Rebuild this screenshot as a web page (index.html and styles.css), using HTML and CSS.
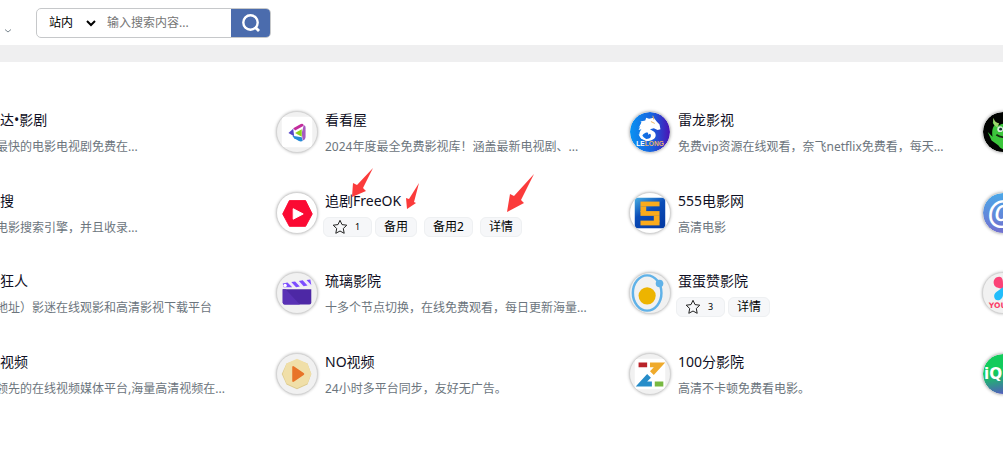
FILE: index.html
```
<!DOCTYPE html>
<html lang="zh-CN">
<head>
<meta charset="utf-8">
<meta name="viewport" content="width=device-width, initial-scale=1.0">
<title>影视导航</title>
<link rel="stylesheet" href="styles.css">
</head>
<body>
	<header>
		<svg class="caret" viewBox="0 0 8 6"><path d="M1 1.500l3 2.500 3-2.500" fill="none" stroke="#7c8890" stroke-width="1"/></svg>
		<form class="search">
			<select aria-label="搜索范围"><option>站内</option></select>
			<input type="text" placeholder="输入搜索内容..." aria-label="搜索">
			<button type="button" aria-label="搜索">
				<svg viewBox="0 0 20 20"><circle cx="9.500" cy="9.500" r="7.200" fill="none" stroke="#fff" stroke-width="2.400"/><path d="M14 14l4 4" stroke="#fff" stroke-width="2.800"/></svg>
			</button>
		</form>
	</header>
	<main>
		<div class="list">
			<!-- 第一行 -->
			<div class="card">
				<span class="logo"></span>
				<div class="info">
					<a class="name" href="#">影视达•影剧</a>
					<p>更新最快的电影电视剧免费在...</p>
				</div>
			</div>
			<div class="card">
				<span class="logo">
					<svg viewBox="0 0 42 42">
						<path fill="#fff" d="M5 5h32v32H5z"/>
						<path d="M17 17l8-4.500q3-1 3 2l-9 5z" fill="#c32c9c"/>
						<path d="M28 14q2 0 2 3v9q0 3-3 4l-1-8z" fill="#a65bc0"/>
						<path d="M12 22l5-4.500 1 8z" fill="#5545c8"/>
						<path d="M16 25l10 1.500 1 4q-2 1-4 0l-5-3z" fill="#268bd7"/>
						<path d="M19 22l7-4v8z" fill="#8ed31c"/>
					</svg>
				</span>
				<div class="info">
					<a class="name" href="#">看看屋</a>
					<p>2024年度最全免费影视库！涵盖最新电视剧、...</p>
				</div>
			</div>
			<div class="card">
				<span class="logo">
					<svg viewBox="0 0 42 42">
						<defs><linearGradient id="lelong"><stop offset="0" stop-color="#0a92f2"/><stop offset=".55" stop-color="#1762de"/><stop offset="1" stop-color="#4b12b4"/></linearGradient></defs>
						<circle cx="21" cy="21" r="21" fill="url(#lelong)"/>
						<path d="M9 17l3-6-1-1 5-1 1-3 3 1 5-1 3 4 3 3 1 5-3 1-4-2-4 1 3 2c4 2 4 7 0 9-3 2-8 2-10-1 4 1 8 0 8-3s-4-4-6-3c-3 1-4 4-3 7-4-3-4-8-1-11l-3 1 2-4z" fill="#fff"/>
						<path d="M9 23c2 5 6 8 12 7-3-1-6-2-8-5z" fill="#fff"/>
						<path d="M19 18l5 3-5 3z" fill="#fff"/>
						<path d="M22 10l4 2M24 4l1 4" stroke="#e9b35c" stroke-width="1"/>
						<text x="21" y="36" class="lelong">LE<tspan fill="#e4b271">LONG</tspan></text>
					</svg>
				</span>
				<div class="info">
					<a class="name" href="#">雷龙影视</a>
					<p>免费vip资源在线观看，奈飞netflix免费看，每天...</p>
				</div>
			</div>
			<div class="card">
				<span class="logo">
					<svg viewBox="0 0 42 42">
						<circle cx="21" cy="21" r="21" fill="#020402"/>
						<path d="M11 9c1 5 3 6 6 5 4-3 9-2 13 0l5-6-1 9c4 8 3 16-3 21-6 3-12 2-15-3l-7-5-4-9 5 5c-1-6 0-9 2-12-2-2-2-3-1-5z" fill="#3cc63c"/>
						<path d="M11 6c1 4 3 5 6 6l-2 4c-4-2-5-6-4-10z" fill="#9ed66c"/>
						<circle cx="18" cy="18" r="3" fill="#d9f0dc"/><circle cx="18.500" cy="18" r="1.500" fill="#14332c"/>
						<path d="M14 24c4 3 8 3 12 1" fill="none" stroke="#162b10" stroke-width="2"/>
					</svg>
				</span>
			</div>

			<!-- 第二行 -->
			<div class="card">
				<span class="logo"></span>
				<div class="info">
					<a class="name" href="#">影视搜</a>
					<p>专业电影搜索引擎，并且收录...</p>
				</div>
			</div>
			<div class="card">
				<span class="logo white">
					<svg viewBox="0 0 42 42">
						<path d="M6 22l7-14h17l7 14-7 13H13z" fill="#fb0a33" stroke="#fb0a33" stroke-linejoin="round"/>
						<path d="M17 16.500v11l10.500-5.500z" fill="#fff" stroke="#fff" stroke-linejoin="round"/>
					</svg>
				</span>
				<div class="info">
					<a class="name" href="#">追剧FreeOK</a>
					<div class="tags">
						<button type="button" class="tag like"><svg viewBox="0 0 16 16"><path d="M8 1.300l2 4.300 4.800.6-3.500 3.300.9 4.800L8 12l-4.200 2.300.9-4.800L1.200 6.200 6 5.600z"/></svg><span>1</span></button>
						<a class="tag" href="#">备用</a>
						<a class="tag" href="#">备用2</a>
						<a class="tag" href="#">详情</a>
					</div>
				</div>
				<svg class="arrow arrow-name" viewBox="0 0 21 29"><path d="M0 29L1 15l4 2L21 0 11 20l3 3z"/></svg>
				<svg class="arrow arrow-backup" viewBox="0 0 13 26"><path d="M1 26L0 15l3 1L13 0 8 19l2 1z"/></svg>
				<svg class="arrow arrow-detail" viewBox="0 0 27 38"><path d="M0 38L3 20l4 2L27 0 14 26l3 3z"/></svg>
			</div>
			<div class="card">
				<span class="logo white">
					<svg viewBox="0 0 42 42">
						<defs>
							<linearGradient id="blue" x2=".6" y2="1"><stop offset="0" stop-color="#48aee2"/><stop offset=".5" stop-color="#0b4db8"/><stop offset="1" stop-color="#063da6"/></linearGradient>
						</defs>
						<rect x="5" y="5" width="32" height="32" rx="2" fill="url(#blue)"/>
						<g fill="#faab1c">
							<rect x="11" y="9" width="20" height="5"/>
							<rect x="11" y="14" width="6" height="6"/>
							<rect x="11" y="19" width="20" height="5"/>
							<rect x="25" y="24" width="6" height="6"/>
							<rect x="11" y="29" width="20" height="5"/>
						</g>
					</svg>
				</span>
				<div class="info">
					<a class="name" href="#">555电影网</a>
					<p>高清电影</p>
				</div>
			</div>
			<div class="card">
				<span class="logo">
					<svg viewBox="0 0 42 42">
						<defs><linearGradient id="at" x2="0" y2="1"><stop offset="0" stop-color="#4aa8e8"/><stop offset="1" stop-color="#7270cf"/></linearGradient></defs>
						<circle cx="21" cy="21" r="21" fill="url(#at)"/>
						<text x="21" y="31" class="at">@</text>
					</svg>
				</span>
			</div>

			<!-- 第三行 -->
			<div class="card">
				<span class="logo"></span>
				<div class="info">
					<a class="name" href="#">电影狂人</a>
					<p>（新地址）影迷在线观影和高清影视下载平台</p>
				</div>
			</div>
			<div class="card">
				<span class="logo">
					<svg viewBox="0 0 42 42">
						<path d="M6 17h30v14q0 2-2 2H8q-2 0-2-2z" fill="#4d28a5"/>
						<path d="M6 17h3l15 16H8q-2 0-2-2z" fill="#5931b5"/>
						<path d="M6 12l30-5v7H8q-2 0-2-2z" fill="#eee9fa"/>
						<path d="M6 11l5-1 5 5H7zM15 9.500l4-.7 5 5.500-4 .7zM23 8.400l4-.7 5 5.500-4 .7zM31 7.300l4-.6 1 6z" fill="#7c4dff"/>
						<circle cx="8.500" cy="13" r="1.800" fill="#fff"/>
					</svg>
				</span>
				<div class="info">
					<a class="name" href="#">琉璃影院</a>
					<p>十多个节点切换，在线免费观看，每日更新海量...</p>
				</div>
			</div>
			<div class="card">
				<span class="logo">
					<svg viewBox="0 0 42 42">
						<ellipse cx="18" cy="21" rx="15" ry="18.500" fill="none" stroke="#60b2e8" stroke-width="2.600"/>
						<circle cx="18" cy="24" r="9" fill="#edb400"/>
						<circle cx="31" cy="11" r="4" fill="#60b2e8"/>
					</svg>
				</span>
				<div class="info">
					<a class="name" href="#">蛋蛋赞影院</a>
					<div class="tags">
						<button type="button" class="tag like"><svg viewBox="0 0 16 16"><path d="M8 1.300l2 4.300 4.800.6-3.500 3.300.9 4.800L8 12l-4.200 2.300.9-4.800L1.200 6.200 6 5.600z"/></svg><span>3</span></button>
						<a class="tag" href="#">详情</a>
					</div>
				</div>
			</div>
			<div class="card">
				<span class="logo">
					<svg viewBox="0 0 42 42">
						<path d="M21 17l-7-2C9 12 11 4 17 4c4 0 4 5 4 8 0-3 0-8 4-8 6 0 8 8 3 11z" fill="#fb4377"/>
						<path d="M21 15l-7 5c-5 4-1 11 4 8 3-2 3-4 3-6 0 2 0 4 3 6 5 3 9-4 4-8z" fill="#22bdfb"/>
						<text x="6" y="37" class="you">YOUKU</text>
					</svg>
				</span>
			</div>

			<!-- 第四行 -->
			<div class="card">
				<span class="logo"></span>
				<div class="info">
					<a class="name" href="#">腾讯视频</a>
					<p>中国领先的在线视频媒体平台,海量高清视频在...</p>
				</div>
			</div>
			<div class="card">
				<span class="logo">
					<svg viewBox="0 0 42 42">
						<path d="M21 6l11 4 4 11-4 11-11 5-11-5-5-11 5-11z" fill="#dcca8e"/>
						<path d="M21 5l11 5 4 11-4 10-11 5-11-5-4-10 4-11z" fill="#f0dfa8"/>
						<path d="M16 14q0-2 2-1l10 7q1.500 1 0 2l-10 7q-2 1-2-1z" fill="#e87428"/>
					</svg>
				</span>
				<div class="info">
					<a class="name" href="#">NO视频</a>
					<p>24小时多平台同步，友好无广告。</p>
				</div>
			</div>
			<div class="card">
				<span class="logo">
					<svg viewBox="0 0 42 42">
						<path fill="#fff" d="M5 5h32v32H5z"/>
						<path fill="#b92329" d="M9 9h9v5H9z"/>
						<path fill="#efaa2c" d="M21 9h16L25 22l-4-4 4-4h-4z"/>
						<path fill="#278dc9" d="M6 34l12-13 4 4-4 4h5v5z"/>
						<path fill="#78b942" d="M26 29h9v5h-9z"/>
					</svg>
				</span>
				<div class="info">
					<a class="name" href="#">100分影院</a>
					<p>高清不卡顿免费看电影。</p>
				</div>
			</div>
			<div class="card">
				<span class="logo">
					<svg viewBox="0 0 42 42">
						<defs><linearGradient id="iqy" x1=".6" x2=".8" y2="1"><stop offset=".4" stop-color="#12cb5c"/><stop offset="1" stop-color="#5a50c8"/></linearGradient></defs>
						<circle cx="21" cy="21" r="21" fill="url(#iqy)"/>
						<text x="1" y="26" class="iqy">iQIYI</text>
					</svg>
				</span>
			</div>
		</div>
	</main>
</body>
</html>
```

FILE: styles.css
```
* { margin: 0; padding: 0; box-sizing: border-box; }
body { overflow-x: hidden; background: #fff; font-family: "Noto Sans", "Noto Sans CJK SC", sans-serif; font-size: 12px; }
a { color: inherit; text-decoration: none; }
button, input, select { border: none; background: none; font: inherit; outline: none; }

header { display: flex; align-items: center; height: 45px; padding: 0 4px; }
.caret { align-self: flex-end; width: 8px; height: 6px; margin-bottom: 11px; }
.search { display: flex; width: 235px; height: 30px; margin-left: 24px; border: 1px solid #c6c8ca; border-radius: 5px; overflow: hidden; }
.search select { width: 62px; padding-left: 8px; color: #000; }
.search input { flex: 1; min-width: 0; padding-left: 8px; color: #333; }
.search input::placeholder { color: #757575; }
.search button { display: flex; align-items: center; justify-content: center; width: 39px; background: #4b6cad; }
.search button svg { width: 20px; height: 20px; }

main { overflow: hidden; padding: 49px 0 48px; border-top: 17px solid #efeff0; }
.list { display: grid; grid-template-columns: repeat(4, minmax(353px, 1fr)); grid-template-rows: 81px 80px 81px 81px; margin-left: -77px; }
.card { position: relative; display: flex; align-items: flex-start; gap: 7px; }

.logo { flex: none; width: 42px; height: 42px; border: 1px solid #d4d4d4; border-radius: 50%; background: #f1f1f1; box-shadow: 0 0 3px #bbb; overflow: hidden; }
.logo svg { display: block; width: 100%; height: 100%; }
.white { background: #fff; }
.lelong { fill: #fff; font: bold 7px "Liberation Sans", sans-serif; text-anchor: middle; }
.at { fill: #fff; font: bold 34px "Liberation Sans", sans-serif; text-anchor: middle; }
.you { fill: #fb3d68; font: bold 8px "DejaVu Sans", sans-serif; }
.iqy { fill: #fff; font: bold 16px "DejaVu Sans", sans-serif; }

.info { flex: 1; min-width: 0; white-space: nowrap; }
.name { display: block; line-height: 18px; font-size: 14px; color: #0f0f24; }
.info p { margin-top: 8px; line-height: 20px; color: #6c757d; }

.tags { display: flex; gap: 7px; margin: 7px 0 0 -2px; }
.tag { height: 20px; padding: 0 8px; border: 1px solid #eef0f2; border-radius: 6px; background: #f6f7f9; line-height: 18px; color: #000; }
.like { display: flex; align-items: center; gap: 7px; width: 49px; margin-right: -4px; font-size: 9px; }
.like svg { width: 16px; height: 16px; fill: none; stroke: #222; }

.arrow { position: absolute; fill: #fb3b3b; }
.arrow-name { left: 76px; top: -24px; width: 21px; height: 29px; }
.arrow-backup { left: 130px; top: -9px; width: 13px; height: 26px; }
.arrow-detail { left: 231px; top: -18px; width: 27px; height: 38px; }
```
